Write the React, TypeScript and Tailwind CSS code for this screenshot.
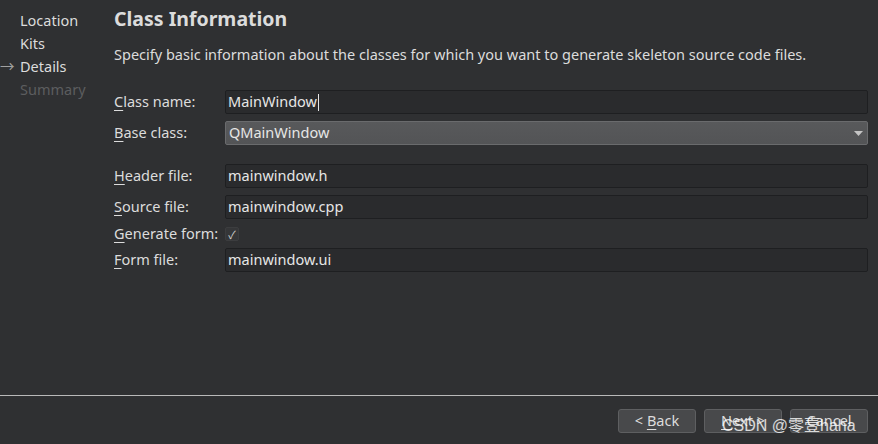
const font = { fontFamily: '"Noto Sans", "Noto Sans CJK SC", sans-serif' };

function U({ c }: { c: string }) {
  return <span className="underline underline-offset-[3px] decoration-1">{c}</span>;
}

function Label({ first, rest }: { first: string; rest: string }) {
  return (
    <div className="w-[111px] shrink-0 text-[14.5px] text-[#dcdcdc]">
      <U c={first} />
      {rest}
    </div>
  );
}

function Field({ value, caret }: { value: string; caret?: boolean }) {
  return (
    <div className="flex h-[24px] flex-1 items-center rounded-[2px] border border-[#1e1f21] bg-[#2a2b2d] px-[2px] text-[14.5px] text-[#e6e6e6]">
      <span>{value}</span>
      {caret && <span className="ml-px h-[17px] w-px bg-[#e6e6e6]" />}
    </div>
  );
}

export default function App() {
  return (
    <div className="relative flex h-[444px] w-[878px] flex-col overflow-hidden bg-[#2f3032]" style={font}>
      <div className="flex flex-1">
        <div className="w-[114px] shrink-0 pt-[9px] text-[14.5px] leading-[23px]">
          <div className="pl-[20px] text-[#dcdcdc]">Location</div>
          <div className="pl-[20px] text-[#dcdcdc]">Kits</div>
          <div className="relative pl-[20px] text-[#dcdcdc]">
            <span className="absolute left-0 top-0 text-[#a0a0a0]">→</span>
            Details
          </div>
          <div className="pl-[20px] text-[#5c5d5f]">Summary</div>
        </div>
        <div className="flex-1 pr-[10px] pt-[5px]">
          <h1 className="text-[19.5px] font-bold leading-[28px] text-[#dcdcdc]">Class Information</h1>
          <p className="mt-[12px] text-[14.5px] leading-[18px] text-[#dcdcdc]">
            Specify basic information about the classes for which you want to generate skeleton source code files.
          </p>
          <div className="mt-[27px] flex flex-col">
            <div className="flex items-center">
              <Label first="C" rest="lass name:" />
              <Field value="MainWindow" caret />
            </div>
            <div className="mt-[7px] flex items-center">
              <Label first="B" rest="ase class:" />
              <div className="flex h-[24px] flex-1 items-center justify-between rounded-[2px] border border-[#6a6b6d] bg-gradient-to-b from-[#58595b] to-[#535456] pl-[3px] pr-[4px] text-[14.5px] text-[#e6e6e6]">
                <span>QMainWindow</span>
                <svg width="9" height="5" viewBox="0 0 9 5">
                  <path d="M0 0 H9 L4.5 5 Z" fill="#c4c4c4" />
                </svg>
              </div>
            </div>
            <div className="mt-[19px] flex items-center">
              <Label first="H" rest="eader file:" />
              <Field value="mainwindow.h" />
            </div>
            <div className="mt-[7px] flex items-center">
              <Label first="S" rest="ource file:" />
              <Field value="mainwindow.cpp" />
            </div>
            <div className="mt-[6px] flex h-[18px] items-center">
              <Label first="G" rest="enerate form:" />
              <div className="flex h-[14px] w-[14px] items-center justify-center rounded-[2px] border border-[#3c3d3f] bg-[#353638] text-[11px] leading-none text-[#d0d0d0]">
                ✓
              </div>
            </div>
            <div className="mt-[5px] flex items-center">
              <Label first="F" rest="orm file:" />
              <Field value="mainwindow.ui" />
            </div>
          </div>
        </div>
      </div>
      <div className="h-px w-full bg-[#b9b9b9]" />
      <div className="flex h-[48px] items-start justify-end gap-[8px] pr-[10px] pt-[13px]">
        <button className="h-[24px] w-[78px] rounded-[3px] border border-[#5e5f61] bg-[#48494b] text-[14.5px] text-[#dcdcdc]">
          &lt; <U c="B" />ack
        </button>
        <button className="h-[24px] w-[78px] rounded-[3px] border border-[#5e5f61] bg-[#48494b] text-[14.5px] text-[#dcdcdc]">
          <U c="N" />ext &gt;
        </button>
        <button className="h-[24px] w-[78px] rounded-[3px] border border-[#5e5f61] bg-[#48494b] text-[14.5px] text-[#dcdcdc]">
          Cancel
        </button>
      </div>
      <div className="pointer-events-none absolute left-[722px] top-[416px] text-[16px] leading-[20px] text-white/80" style={{ fontFamily: '"Liberation Sans", "Noto Sans CJK SC", sans-serif' }}>
        CSDN @零壹haha
      </div>
    </div>
  );
}
